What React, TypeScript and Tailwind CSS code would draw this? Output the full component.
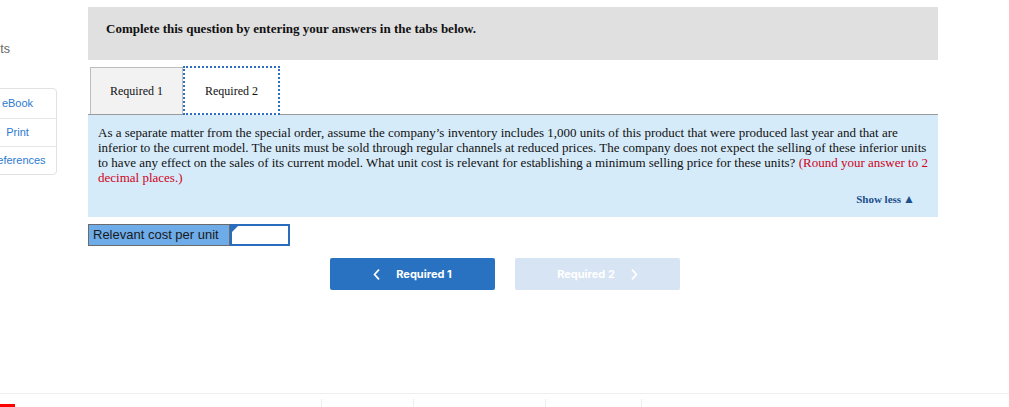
import React from 'react';

const serif = { fontFamily: '"Liberation Serif", "Times New Roman", serif' };

const SideTools: React.FC = () => {
  const items = ['eBook', 'Print', 'References'];
  return (
    <div className="w-[88px] shrink-0 flex flex-col" style={{ fontFamily: '"Liberation Sans", Arial, sans-serif' }}>
      {/* the panel is slid left so only its tail shows */}
      <div className="mt-[41px] -ml-[40px] w-[50px] text-right text-[12.5px] leading-[16px] text-[#666]">Points</div>
      <div className="mt-[31px] -ml-[22px] w-[79px] border border-[#e2e2e2] rounded-[4px] flex flex-col">
        {items.map((it, i) => (
          <div
            key={it}
            className={`flex items-center justify-center text-[11px] text-[#2d7ad0] ${i === 0 ? 'h-[29px]' : 'h-[28px] border-t border-[#e6e6e6]'}`}
          >
            {it}
          </div>
        ))}
      </div>
    </div>
  );
};

const Tabs: React.FC = () => (
  <div className="mt-[6px] h-[49px] flex items-end border-b border-[#9a9a9a] pl-[2px]" style={serif}>
    <div className="w-[93px] h-[47px] bg-[#f2f2f2] border border-b-0 border-[#bdbdbd] flex items-center justify-center text-[12px] text-[#111]">
      Required 1
    </div>
    <div className="w-[97px] h-[49px] -mb-[1px] bg-white border-2 border-dotted border-[#2f6fc0] flex items-center justify-center text-[12px] text-[#111]">
      Required 2
    </div>
  </div>
);

const App: React.FC = () => {
  return (
    <div className="w-[1009px] h-[407px] overflow-hidden bg-white flex flex-col">
      <div className="flex">
        <SideTools />

        <main className="w-[850px] pt-[7px] flex flex-col">
          {/* Instruction header */}
          <div className="h-[53px] bg-[#e0e0e0] pl-[18px] pt-[14px]" style={serif}>
            <p className="text-[13px] leading-[16px] font-bold text-[#111]">
              Complete this question by entering your answers in the tabs below.
            </p>
          </div>

          <Tabs />

          {/* Question body */}
          <div className="h-[102px] bg-[#d6ebf9] px-[10px] pt-[10px] flex flex-col" style={serif}>
            <p className="text-[13px] leading-[15px] text-[#111]">
              As a separate matter from the special order, assume the company’s inventory includes 1,000 units of this product that were produced last year and that are
              inferior to the current model. The units must be sold through regular channels at reduced prices. The company does not expect the selling of these inferior units
              to have any effect on the sales of its current model. What unit cost is relevant for establishing a minimum selling price for these units?{' '}
              <span className="text-[#d0021b]">(Round your answer to 2 decimal places.)</span>
            </p>
            <div className="mt-auto mb-[10px] pr-[13px] flex justify-end items-center gap-[2px] text-[11px] font-bold text-[#1d4f8c]">
              Show less
              <span className="text-[12px] leading-none">▲</span>
            </div>
          </div>

          {/* Answer row */}
          <div className="mt-[7px] flex h-[22px]">
            <div
              className="w-[142px] bg-[#6dabe9] border border-[#6b6b6b] flex items-center pl-[4px] text-[13px] text-[#1a1a1a]"
              style={{ fontFamily: '"Liberation Sans", Arial, sans-serif' }}
            >
              Relevant cost per unit
            </div>
            <div className="relative w-[60px] border-2 border-[#2a6cbd] bg-white">
              <span className="absolute top-0 left-0 w-0 h-0 border-t-[6px] border-r-[6px] border-t-[#2a6cbd] border-r-transparent" />
            </div>
          </div>

          {/* Nav buttons */}
          <div className="mt-[12px] pl-[242px] flex gap-[20px]" style={{ fontFamily: 'Inter, Roboto, sans-serif' }}>
            <button className="w-[165px] h-[32px] rounded-[2px] bg-[#2872c1] text-white text-[11px] font-bold flex items-center justify-center gap-[16px]">
              <svg width="7" height="11" viewBox="0 0 7 11" fill="none" stroke="white" strokeWidth="1.8" strokeLinecap="round" strokeLinejoin="round">
                <path d="M5.5 1.2 1.5 5.5l4 4.3" />
              </svg>
              Required 1
            </button>
            <button className="w-[165px] h-[32px] rounded-[2px] bg-[#d7e4f3] text-white text-[11px] font-bold flex items-center justify-center gap-[16px]">
              Required 2
              <svg width="7" height="11" viewBox="0 0 7 11" fill="none" stroke="white" strokeWidth="1.8" strokeLinecap="round" strokeLinejoin="round">
                <path d="M1.5 1.2l4 4.3-4 4.3" />
              </svg>
            </button>
          </div>
        </main>
      </div>

      {/* Footer strip */}
      <footer className="mt-auto h-[14px] border-t border-[#eeeeee] relative flex">
        <div className="w-[321px]" />
        <div className="mt-[5px] w-[92px] border-l border-[#eeeeee]" />
        <div className="mt-[5px] w-[132px] border-l border-[#eeeeee]" />
        <div className="mt-[5px] w-[96px] border-l border-[#eeeeee]" />
        <div className="mt-[5px] flex-1 border-l border-[#eeeeee]" />
        <span className="absolute left-0 bottom-0 w-[15px] h-[3px] bg-[#ff0000]" />
      </footer>
    </div>
  );
};

export default App;
